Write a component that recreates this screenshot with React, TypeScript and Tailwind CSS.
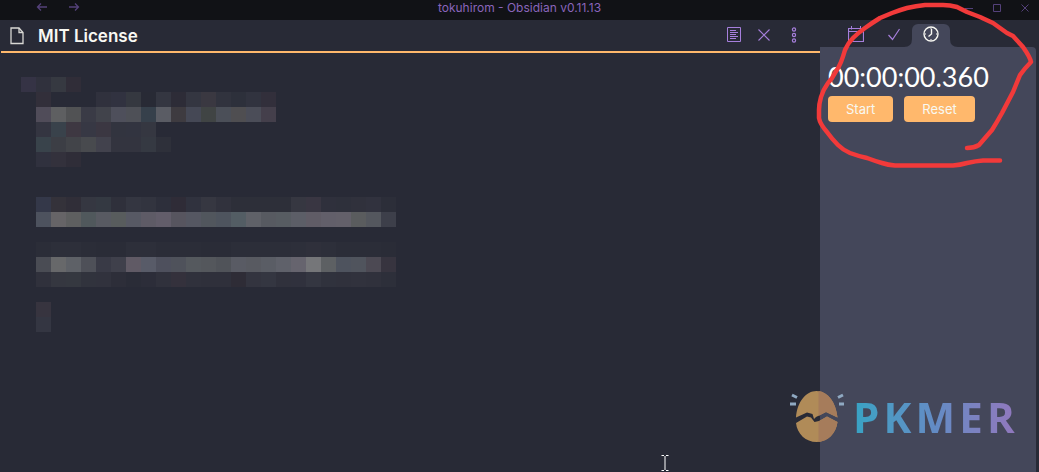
import { useState } from "react"

const BLANK = "#282a36"

// censored note text, one row per 15px line, first cell is the left margin
const mosaic = [
  "353345 30313d 363941 302d38",
  "- 322f3a - - - 30313d 313240 353840 282a35 343641 2d2c37 343641 3a3841 31333e 2d303b 31333f 322f3b",
  "- 504c59 5e5f61 515254 3a3b46 41434b 4e4f5b 4e5057 36404b 5a5c64 3e3b40 454855 404444 4b4f58 4f4e51 4b4d58 443f4b",
  "- 343541 39424b 3e3842 373844 3b3742 32343f 323440 353741",
  "- 39434b 3c3e45 424449 484a4e 42424d 33343f 33343f 353942 2e303a",
  "- 30313e 33313c 2f2d38",
  "-",
  "-",
  "- 343849 34323a 302e38 353741 343942 2f303b 343641 32343f 2d2f3b 2f2c37 30323e 363741 31323d 2d2f39 2d2f39 2d2f39 2d2f39 363741 393642 2f303c 2e303b 30313c 31323e 2c2e39",
  "- 4d525e 666467 5e5f60 50585c 585a62 585c5d 575964 5e5b66 625d6a 57555f 555762 51565d 4e545e 535d64 5f6168 575a61 575c62 5c5e67 605c66 625f6a 63606a 5a5c5e 54575e 3d3f4a",
  "-",
  "- 2b2d38 2d2f3a 2d2f3a 2b2d38 2a2c37 2a2c37 2d2f3a 2d2f3a 2b2d38 2b2d38 2b2d38 2a2c37 2a2c37 2c2e39 2c2e39 2c2e39 2c2e39 2d2f3a 2f303b 2d2f3a 2b2d38 2b2d38 2b2d38 2a2c37",
  "- 4a4c54 67686a 5e6167 4e5058 393a46 3f404b 605a65 585b68 4e505d 4f525b 55595e 54575c 505359 595b64 585a61 5a5d65 5f616a 66646e 757679 5d6063 4e535e 50545d 4c4953 37343f",
  "- 30313c 353740 353840 31333d 31323d 2d2e39 2a2c37 2c2d39 30313c 34313c 30313c 2f303b 2f303b 2e2c36 33343f 343641 30313c 30313d 343641 30323d 30313c 31323d 30313c 2d2f3a",
  "-",
  "- 37343f",
  "- 343642",
]

function Mosaic() {
  return (
    <div aria-hidden="true">
      {mosaic.map((row, y) => (
        <div key={y} className="flex h-[15px]">
          {row.split(" ").map((c, x) => (
            <span
              key={x}
              className="w-[15px] h-full shrink-0"
              style={{ backgroundColor: c === "-" ? BLANK : "#" + c }}
            />
          ))}
        </div>
      ))}
    </div>
  )
}

function TitleBar() {
  return (
    <header className="h-5 bg-[#111216] grid grid-cols-[1fr_auto_1fr] items-center text-[#54417a]">
      <div className="flex gap-5 pl-9 pb-[6px]">
        <button aria-label="Back">
          <svg width="12" height="10" viewBox="0 0 12 10" fill="none" stroke="currentColor" strokeWidth="1.3">
            <path d="M11 5H2M5 1.5L1.5 5L5 8.5" />
          </svg>
        </button>
        <button aria-label="Forward">
          <svg width="12" height="10" viewBox="0 0 12 10" fill="none" stroke="currentColor" strokeWidth="1.3">
            <path d="M1 5H10M7 1.5L10.5 5L7 8.5" />
          </svg>
        </button>
      </div>
      <h1 className="font-['Inter',sans-serif] text-xs leading-4 pb-1 text-[#8a65bb]">
        tokuhirom - Obsidian v0.11.13
      </h1>
      <div className="flex justify-end gap-5 pr-[10px] pb-1">
        <button aria-label="Minimize">
          <svg width="8" height="8" viewBox="0 0 8 8" stroke="currentColor">
            <path d="M0 4.5H8" />
          </svg>
        </button>
        <button aria-label="Maximize">
          <svg width="8" height="8" viewBox="0 0 8 8" fill="none" stroke="currentColor">
            <path d="M.5 .5H7.5V7.5H.5Z" />
          </svg>
        </button>
        <button aria-label="Close window">
          <svg width="8" height="8" viewBox="0 0 8 8" stroke="currentColor">
            <path d="M.5 .5L7.5 7.5M7.5 .5L.5 7.5" />
          </svg>
        </button>
      </div>
    </header>
  )
}

function Note() {
  return (
    <main className="flex-1 min-w-0 flex flex-col">
      <div className="h-[33px] shrink-0 flex items-center border-b-2 border-[#ffb86c] pl-[9px] pr-[11px]">
        <svg width="14" height="18" viewBox="0 0 14 18" fill="none" stroke="#d8d8d4" strokeWidth="1.3">
          <path d="M1 1H9L13 5.5V16.5H1Z" />
          <path d="M9 1V5.5H13" />
        </svg>
        <h2 className="flex-1 pl-[14px] font-['Inter',sans-serif] font-semibold text-[17px] leading-6 text-[#f8f8f2]">
          MIT License
        </h2>
        <div className="flex items-center pb-[2px] text-[#a67fdc]">
          <button aria-label="Preview" className="w-[30px] flex justify-center">
            <svg width="14" height="15" viewBox="0 0 14 15" fill="none" stroke="currentColor">
              <path d="M.5 .5H13.5V14.5H.5Z" />
              <path d="M3 3.5H9M3 5.5H11M3 7.5H9M3 9.5H11M3 11.5H9" />
            </svg>
          </button>
          <button aria-label="Close" className="w-[30px] flex justify-center">
            <svg width="12" height="12" viewBox="0 0 12 12" stroke="currentColor" strokeWidth="1.1">
              <path d="M.5 .5L11.5 11.5M11.5 .5L.5 11.5" />
            </svg>
          </button>
          <button aria-label="More options" className="w-[30px] flex justify-center">
            <svg width="6" height="16" viewBox="0 0 6 16" fill="none" stroke="currentColor" strokeWidth="1.2">
              <circle cx="3" cy="2.5" r="1.6" />
              <circle cx="3" cy="8" r="1.6" />
              <circle cx="3" cy="13.5" r="1.6" />
            </svg>
          </button>
        </div>
      </div>
      <div className="pl-5 pt-6">
        <Mosaic />
      </div>
    </main>
  )
}

function Stopwatch() {
  const [time, setTime] = useState("00:00:00.360")
  const btn =
    "h-[26px] px-[18px] rounded bg-[#ffb86c] font-['Inter',sans-serif] text-[13px] leading-4 text-[#f8f8f2]"

  return (
    <section className="flex-1 bg-[#44475a] rounded-tr-sm pl-2 pt-3">
      <p className="font-['Lato',sans-serif] text-[27px] leading-9 text-white">{time}</p>
      <div className="flex gap-[11px] pt-px">
        <button className={btn}>Start</button>
        <button className={btn} onClick={() => setTime("00:00:00.000")}>
          Reset
        </button>
      </div>
    </section>
  )
}

function Sidebar() {
  return (
    <aside className="w-[219px] shrink-0 pr-[3px] flex flex-col">
      <nav className="h-[27px] flex items-end pl-[17px] text-[#a67fdc]">
        <button aria-label="Calendar" className="w-[38px] h-[23px] flex justify-center pt-[2px]">
          <svg width="16" height="16" viewBox="0 0 16 16" fill="none" stroke="currentColor">
            <path d="M.5 2.5H15.5V15.5H.5Z" strokeWidth="1.2" />
            <path d="M.5 5.5H15.5M3.5 0V3.5M12.5 0V3.5" />
          </svg>
        </button>
        <button aria-label="Tasks" className="w-[37px] h-[23px] flex justify-center pt-1">
          <svg width="14" height="13" viewBox="0 0 14 13" fill="none" stroke="currentColor" strokeWidth="1.2">
            <path d="M1.5 7L5.5 11.5L12.5 1" />
          </svg>
        </button>
        <button
          aria-label="Stopwatch"
          className="relative w-[38px] h-[23px] flex justify-center pt-[2px] rounded-t-md bg-[#44475a] text-[#f8f8f2]"
        >
          <svg width="16" height="16" viewBox="0 0 16 16" fill="none" stroke="currentColor" strokeWidth="1.4">
            <circle cx="8" cy="8" r="7" />
            <path d="M8.5 3V8L5.5 10.5" />
            <path d="M8 2V3M8 13V14M2 8H3M13 8H14" strokeWidth="1" />
          </svg>
          <svg className="absolute bottom-0 right-full" width="8" height="8" fill="#44475a">
            <path d="M8 0V8H0Q8 8 8 0Z" />
          </svg>
          <svg className="absolute bottom-0 left-full" width="8" height="8" fill="#44475a">
            <path d="M0 0V8H8Q0 8 0 0Z" />
          </svg>
        </button>
      </nav>
      <Stopwatch />
    </aside>
  )
}

// hand drawn red loop around the stopwatch
function Scribble() {
  return (
    <svg
      className="absolute top-0 right-0 pointer-events-none"
      width="229"
      height="175"
      viewBox="810 0 229 175"
      fill="none"
      stroke="#f23a3a"
      strokeWidth="4.500"
      strokeLinecap="round"
      strokeLinejoin="round"
    >
      <path d="M967 148Q974 148 979 145Q985 138 992 130Q997 122 1002 113L1013 92L1020 75Q1025 68 1031 62Q1030 57 1023 47L1013 36L1007 33L993 23L980 17L967 12L957 7Q950 5 943 5H925Q916 6 907 8Q900 10 892 13L880 18Q872 23 865 28Q858 33 853 38Q848 43 845 50Q843 57 841 62Q839 67 835 73Q832 79 828 83Q823 90 821 97Q819 104 819 110V118Q820 124 827 132Q832 139 838 145Q843 150 850 153Q858 156 867 158Q875 161 882 163Q888 165 895 165.500H953Q960 165 967 163Q976 161 983 160.500H1000" />
    </svg>
  )
}

function Watermark() {
  return (
    <div className="absolute right-5 bottom-7 flex items-center gap-2 pointer-events-none">
      <svg width="56" height="54" viewBox="0 0 56 54">
        <g fill="#b08b58">
          <path d="M7 27.500C8 12 17 1 27.500 1S47 12 48.500 27.500L37 22L27 27L25 29L23.500 24L18 22.500Z" />
          <path d="M7 33L18 26.500L22 27.500L25.500 32L30 31L38 26.500L48.500 32C47 44 38 52 27.500 52S8 44 7 33Z" />
        </g>
        <path d="M29.500 1C39 2 47 12 48.500 27.500L37 22L29.500 26ZM29.500 31.500L38 26.500L48.500 32C47 44 39 51 29.500 52Z" fill="#a67c5b" />
        <path d="M3 5L8 7.500M1 14H7M54 5L49 7.500M50 14H55" stroke="#8fa9c2" strokeWidth="3" />
      </svg>
      <span className="font-['Open_Sans',sans-serif] font-bold text-[42px] leading-[54px] tracking-widest bg-linear-to-r from-[#36a3c4] via-[#638bc4] to-[#9277bd] bg-clip-text text-transparent">
        PKMER
      </span>
    </div>
  )
}

export default function App() {
  return (
    <div className="relative min-h-screen flex flex-col bg-[#282a36] overflow-hidden">
      <TitleBar />
      <div className="flex-1 flex pl-px">
        <Note />
        <Sidebar />
      </div>
      <Watermark />
      <Scribble />
      {/* text cursor */}
      <svg className="absolute left-[64%] bottom-0 -translate-x-1/2" width="8" height="18" viewBox="0 0 8 18" stroke="#ffffff">
        <path d="M0.500 1.500H3M5 1.500H7.500M4 2V16M0.500 16.500H3M5 16.500H7.500" fill="none" />
      </svg>
    </div>
  )
}
